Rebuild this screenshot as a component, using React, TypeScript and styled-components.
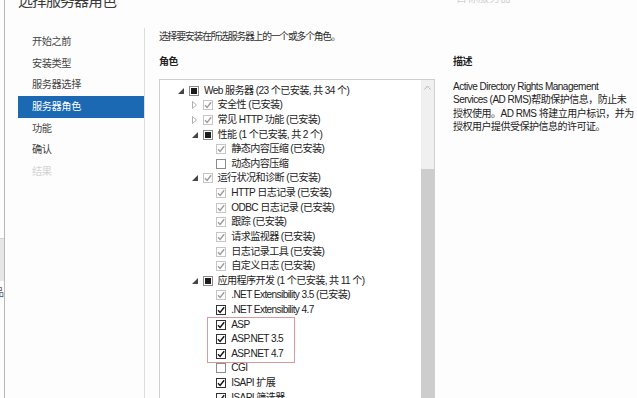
import styled, { createGlobalStyle } from "styled-components";

const GlobalStyle = createGlobalStyle`
  html, body {
    margin: 0;
    padding: 0;
    background: #fdfdfd;
  }
  body {
    font-family: "Liberation Sans", "Noto Sans CJK SC", sans-serif;
    color: #222;
    overflow: hidden;
  }
`;

type CheckState = "installed" | "partial" | "checked" | "empty";
type Expand = "open" | "closed" | "none";

interface RoleNode {
  label: string;
  level: number;
  expand: Expand;
  check: CheckState;
}

const navItems = [
  { label: "开始之前" },
  { label: "安装类型" },
  { label: "服务器选择" },
  { label: "服务器角色", active: true },
  { label: "功能" },
  { label: "确认" },
  { label: "结果", disabled: true },
];

const roles: RoleNode[] = [
  { label: "Web 服务器 (23 个已安装, 共 34 个)", level: 0, expand: "open", check: "partial" },
  { label: "安全性 (已安装)", level: 1, expand: "closed", check: "installed" },
  { label: "常见 HTTP 功能 (已安装)", level: 1, expand: "closed", check: "installed" },
  { label: "性能 (1 个已安装, 共 2 个)", level: 1, expand: "open", check: "partial" },
  { label: "静态内容压缩 (已安装)", level: 2, expand: "none", check: "installed" },
  { label: "动态内容压缩", level: 2, expand: "none", check: "empty" },
  { label: "运行状况和诊断 (已安装)", level: 1, expand: "open", check: "installed" },
  { label: "HTTP 日志记录 (已安装)", level: 2, expand: "none", check: "installed" },
  { label: "ODBC 日志记录 (已安装)", level: 2, expand: "none", check: "installed" },
  { label: "跟踪 (已安装)", level: 2, expand: "none", check: "installed" },
  { label: "请求监视器 (已安装)", level: 2, expand: "none", check: "installed" },
  { label: "日志记录工具 (已安装)", level: 2, expand: "none", check: "installed" },
  { label: "自定义日志 (已安装)", level: 2, expand: "none", check: "installed" },
  { label: "应用程序开发 (1 个已安装, 共 11 个)", level: 1, expand: "open", check: "partial" },
  { label: ".NET Extensibility 3.5 (已安装)", level: 2, expand: "none", check: "installed" },
  { label: ".NET Extensibility 4.7", level: 2, expand: "none", check: "checked" },
  { label: "ASP", level: 2, expand: "none", check: "checked" },
  { label: "ASP.NET 3.5", level: 2, expand: "none", check: "checked" },
  { label: "ASP.NET 4.7", level: 2, expand: "none", check: "checked" },
  { label: "CGI", level: 2, expand: "none", check: "empty" },
  { label: "ISAPI 扩展", level: 2, expand: "none", check: "checked" },
  { label: "ISAPI 筛选器", level: 2, expand: "none", check: "checked" },
];

const descLines = [
  "Active Directory Rights Management",
  "Services (AD RMS)帮助保护信息，防止未",
  "授权使用。AD RMS 将建立用户标识，并为",
  "授权用户提供受保护信息的许可证。",
];

const Expander = ({ kind }: { kind: Expand }) => (
  <ExpanderSlot>
    {kind === "open" && (
      <svg width="6" height="6" viewBox="0 0 6 6">
        <polygon points="6,0 6,6 0,6" fill="#454545" />
      </svg>
    )}
    {kind === "closed" && (
      <svg width="5" height="8" viewBox="0 0 5 8">
        <polygon points="0.5,0.5 4.5,4 0.5,7.5" fill="none" stroke="#b0b0b0" strokeWidth="1" />
      </svg>
    )}
  </ExpanderSlot>
);

const Check = ({ state }: { state: CheckState }) => (
  <Box $state={state}>
    {(state === "installed" || state === "checked") && (
      <svg width="8" height="8" viewBox="0 0 8 8">
        <path
          d="M1 4.2 L3.1 6.4 L7.2 1.2"
          fill="none"
          stroke={state === "installed" ? "#9c9c9c" : "#111"}
          strokeWidth="1.4"
        />
      </svg>
    )}
    {state === "partial" && <PartialFill />}
  </Box>
);

const RoleRow = ({ node }: { node: RoleNode }) => (
  <Row $level={node.level}>
    <Expander kind={node.expand} />
    <Check state={node.check} />
    <RowLabel>{node.label}</RowLabel>
  </Row>
);

const App = () => {
  return (
    <>
      <GlobalStyle />
      <Frame>
        <EdgeStrip>
          <EdgeBlock />
          <EdgeGlyph>品</EdgeGlyph>
        </EdgeStrip>
        <Wizard>
          <Header>
            <Title>选择服务器角色</Title>
            <Target>目标服务器</Target>
          </Header>
          <Body>
            <Nav>
              {navItems.map((item) => (
                <NavItem
                  key={item.label}
                  $active={!!item.active}
                  $disabled={!!item.disabled}
                >
                  {item.label}
                </NavItem>
              ))}
            </Nav>
            <Content>
              <Intro>选择要安装在所选服务器上的一个或多个角色。</Intro>
              <Columns>
                <RolesColumn>
                  <Heading>角色</Heading>
                  <TreeBox>
                    <TreeList>
                      {roles.slice(0, 16).map((r) => (
                        <RoleRow key={r.label} node={r} />
                      ))}
                      <Marked>
                        {roles.slice(16, 19).map((r) => (
                          <RoleRow key={r.label} node={r} />
                        ))}
                      </Marked>
                      {roles.slice(19).map((r) => (
                        <RoleRow key={r.label} node={r} />
                      ))}
                    </TreeList>
                    <Scrollbar>
                      <ScrollArrow>
                        <svg width="7" height="5" viewBox="0 0 7 5">
                          <path d="M0.5 4.5 L3.5 1 L6.5 4.5" fill="none" stroke="#b5b5b5" strokeWidth="1" />
                        </svg>
                      </ScrollArrow>
                      <ScrollTrack />
                      <ScrollThumb />
                    </Scrollbar>
                  </TreeBox>
                </RolesColumn>
                <DescColumn>
                  <Heading>描述</Heading>
                  <DescText>
                    {descLines.map((line) => (
                      <DescLine key={line}>{line}</DescLine>
                    ))}
                  </DescText>
                </DescColumn>
              </Columns>
            </Content>
          </Body>
        </Wizard>
      </Frame>
    </>
  );
};

export default App;

const Frame = styled.div`
  width: 637px;
  height: 398px;
  display: flex;
  overflow: hidden;
  background: #fdfdfd;
`;

const EdgeStrip = styled.div`
  width: 4px;
  flex-shrink: 0;
  display: flex;
  flex-direction: column;
  padding-top: 238px;
  overflow: hidden;
`;

const EdgeBlock = styled.div`
  height: 42px;
  background: #e6e6e6;
  border-top: 1px solid #d2d2d2;
`;

const EdgeGlyph = styled.div`
  margin-top: 6px;
  margin-left: -6px;
  font-size: 10px;
  line-height: 12px;
  color: #555;
`;

const Wizard = styled.div`
  flex: 1;
  display: flex;
  flex-direction: column;
  border-left: 1px solid #b9b9b9;
  min-width: 0;
`;

const Header = styled.div`
  height: 28px;
  display: flex;
  justify-content: space-between;
  align-items: flex-start;
  padding: 0 126px 0 13px;
`;

const Title = styled.div`
  margin-top: -9px;
  font-size: 15px;
  letter-spacing: -1px;
  line-height: 20px;
  color: #3a3a3a;
`;

const Target = styled.div`
  margin-top: -9px;
  font-size: 11px;
  line-height: 14px;
  color: #d0d0d0;
`;

const Body = styled.div`
  flex: 1;
  display: flex;
  min-height: 0;
`;

const Nav = styled.div`
  width: 126px;
  padding: 3px 0 0 13px;
  display: flex;
  flex-direction: column;
  flex-shrink: 0;
`;

const NavItem = styled.div<{ $active: boolean; $disabled: boolean }>`
  height: 21.7px;
  line-height: 21.7px;
  padding-left: 14px;
  font-size: 10.2px;
  letter-spacing: -0.4px;
  color: ${({ $active, $disabled }) =>
    $active ? "#ffffff" : $disabled ? "#d2d2d2" : "#444444"};
  background: ${({ $active }) => ($active ? "#1b68b3" : "transparent")};
`;

const Content = styled.div`
  flex: 1;
  border-left: 1px solid #dcdcdc;
  padding: 2px 0 0 14px;
  display: flex;
  flex-direction: column;
  min-width: 0;
`;

const Intro = styled.div`
  font-size: 9.8px;
  letter-spacing: -1.2px;
  line-height: 14px;
  color: #2e2e2e;
`;

const Columns = styled.div`
  display: flex;
  gap: 18px;
  margin-top: 11px;
`;

const RolesColumn = styled.div`
  width: 276px;
  flex-shrink: 0;
  display: flex;
  flex-direction: column;
`;

const Heading = styled.div`
  font-size: 10px;
  letter-spacing: -0.4px;
  line-height: 14px;
  font-weight: 700;
  color: #222;
  height: 24px;
`;

const TreeBox = styled.div`
  height: 330px;
  border: 1px solid #cfcfcf;
  display: flex;
  background: #ffffff;
  overflow: hidden;
`;

const TreeList = styled.div`
  flex: 1;
  padding-top: 3.5px;
  display: flex;
  flex-direction: column;
`;

const Row = styled.div<{ $level: number }>`
  height: 14.62px;
  display: flex;
  align-items: center;
  padding-left: ${({ $level }) => 18 + $level * 13.6}px;
  white-space: nowrap;
`;

const ExpanderSlot = styled.span`
  width: 11px;
  height: 10px;
  display: inline-flex;
  align-items: center;
  justify-content: flex-start;
  flex-shrink: 0;
`;

const Box = styled.span<{ $state: CheckState }>`
  width: 8px;
  height: 8px;
  margin-right: 5px;
  flex-shrink: 0;
  display: inline-flex;
  align-items: center;
  justify-content: center;
  background: #ffffff;
  border: 1px solid
    ${({ $state }) =>
      $state === "installed"
        ? "#c6c6c6"
        : $state === "checked"
        ? "#333333"
        : $state === "partial"
        ? "#8a8a8a"
        : "#8c8c8c"};
`;

const PartialFill = styled.span`
  width: 6px;
  height: 6px;
  background: #1c1c1c;
`;

const RowLabel = styled.span`
  font-size: 10.1px;
  letter-spacing: -0.6px;
  line-height: 14px;
  color: #222;
`;

const Marked = styled.div`
  position: relative;
  display: flex;
  flex-direction: column;

  &::before {
    content: "";
    position: absolute;
    left: 47px;
    width: 86px;
    top: 0;
    bottom: -2px;
    border: 1px solid #d99a9a;
    pointer-events: none;
  }
`;

const Scrollbar = styled.div`
  width: 13px;
  flex-shrink: 0;
  display: flex;
  flex-direction: column;
  background: #f0f0f0;
`;

const ScrollArrow = styled.div`
  height: 14px;
  display: flex;
  align-items: center;
  justify-content: center;
`;

const ScrollTrack = styled.div`
  height: 75px;
`;

const ScrollThumb = styled.div`
  flex: 1;
  background: #cdcdcd;
`;

const DescColumn = styled.div`
  width: 176px;
  display: flex;
  flex-direction: column;
`;

const DescText = styled.div`
  margin-top: 1px;
  display: flex;
  flex-direction: column;
`;

const DescLine = styled.div`
  font-size: 10px;
  letter-spacing: -0.5px;
  line-height: 13.3px;
  white-space: nowrap;
  color: #222;
`;
